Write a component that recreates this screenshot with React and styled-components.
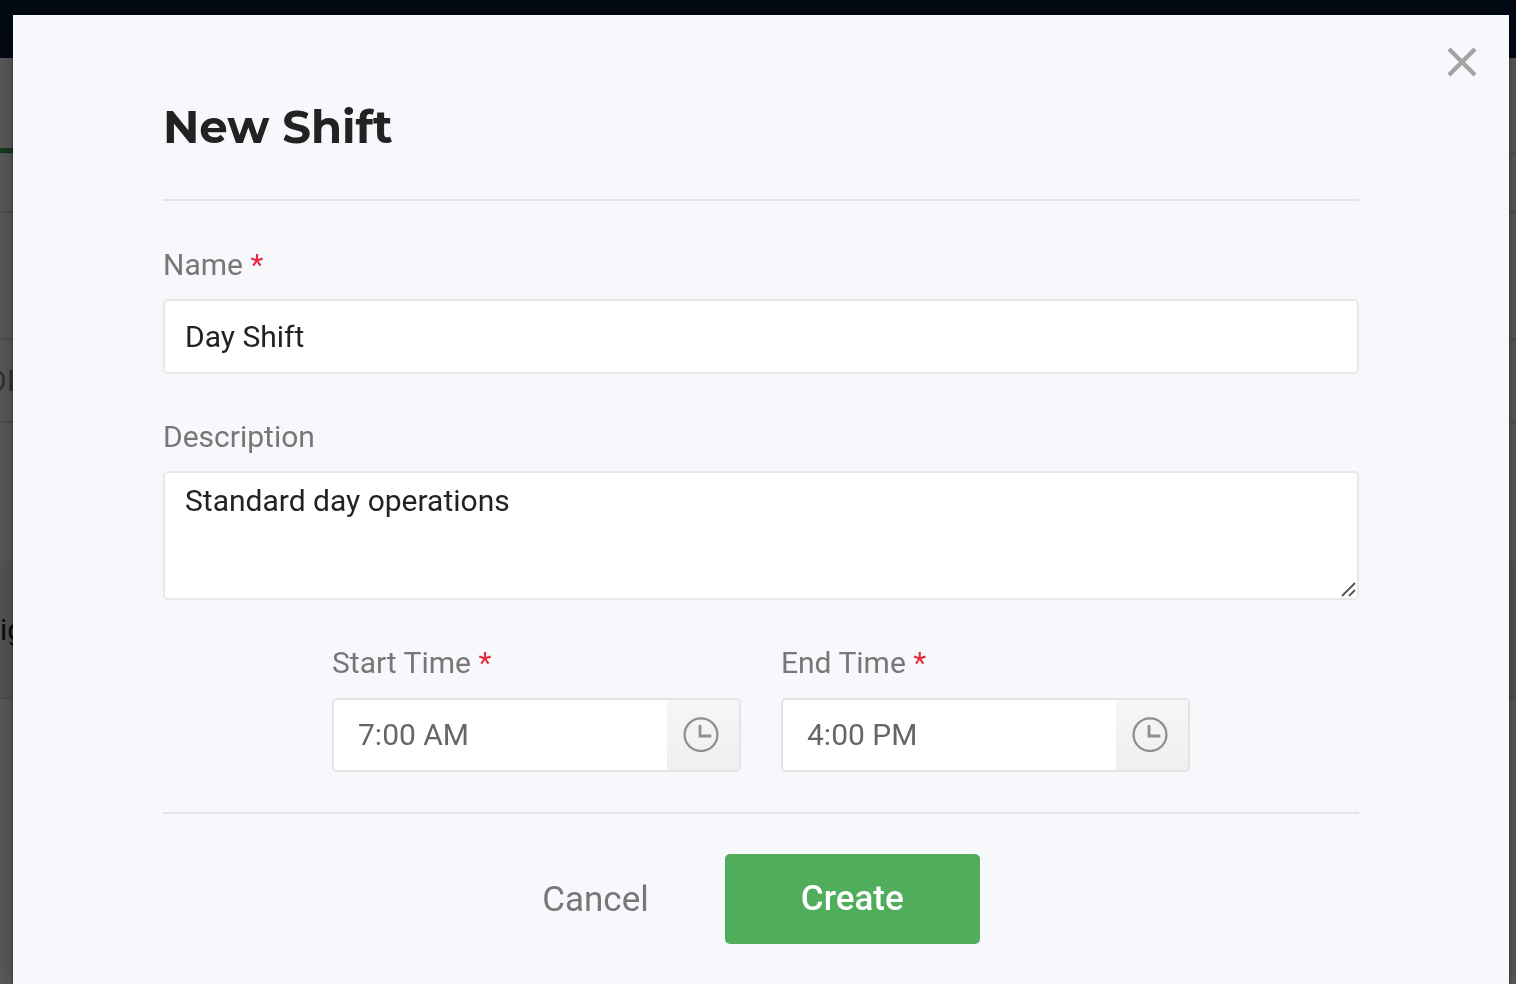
import React, { useState } from "react";
import styled, { createGlobalStyle } from "styled-components";

const GlobalStyle = createGlobalStyle`
  * {
    box-sizing: border-box;
  }
  body {
    margin: 0;
    overflow: hidden;
    background: #fff;
    font-family: Roboto, "Liberation Sans", sans-serif;
    font-size: 30px;
    color: #222;
  }
`;

const Page = styled.div`
  min-height: 100vh;
  overflow: hidden;
`;

const TopBar = styled.header`
  height: 58px;
  background: #051c36;
`;

const Tabs = styled.nav`
  display: flex;
  height: 96px;
  border-bottom: 2px solid #e8e8e8;
`;

const Tab = styled.div`
  width: 120px;
  height: 95px;
  border-bottom: 5px solid #3fa648;
`;

const PageRow = styled.div`
  display: flex;
  align-items: center;
  height: ${({ $height }) => $height}px;
  background: ${({ $shaded }) => ($shaded ? "#efefef" : "#fff")};
  border-bottom: ${({ $line }) => ($line ? "2px solid #e0e0e0" : "none")};
  color: ${({ $muted }) => ($muted ? "#8c8c8c" : "#222")};
`;

const Clipped = styled.span`
  margin-left: -14px;
`;

const Overlay = styled.div`
  position: fixed;
  inset: 0;
  display: flex;
  padding: 15px 7px 0 13px;
  background: rgba(0, 0, 0, 0.65);
`;

const Modal = styled.form`
  position: relative;
  flex: 1;
  min-width: 0;
  padding: 84px 150px 40px;
  background: #f6f8fc;
  box-shadow: 0 0 3px rgba(0, 0, 0, 0.4), 0 0 20px rgba(0, 0, 0, 0.3);
`;

const CloseButton = styled.button`
  position: absolute;
  top: 32px;
  right: 32px;
  display: flex;
  padding: 0;
  border: 0;
  background: none;
  color: #a3a3a3;
  cursor: pointer;
`;

const Title = styled.h1`
  margin: 0;
  font-family: Montserrat, Inter, sans-serif;
  font-size: 45px;
  font-weight: 700;
  line-height: 56px;
`;

const Divider = styled.hr`
  height: 2px;
  margin: 44px 0;
  border: 0;
  background: #e3e5e5;
`;

const Field = styled.div`
  display: flex;
  flex-direction: column;
  gap: 15px;
  margin-bottom: 43px;
`;

const Label = styled.label`
  line-height: 39px;
  color: #777;
`;

const Required = styled.span`
  color: #e8283c;
`;

const TextInput = styled.input`
  width: 100%;
  height: 75px;
  padding: 0 20px;
  border: 2px solid #e7e8e8;
  border-radius: 5px;
  background: #fff;
  color: #222;
  font: inherit;
  outline: none;
`;

const AreaWrap = styled.div`
  position: relative;
  display: flex;
`;

const TextArea = styled.textarea`
  width: 100%;
  height: 129px;
  padding: 8px 20px;
  border: 2px solid #e7e8e8;
  border-radius: 5px;
  background: #fff;
  color: #222;
  font: inherit;
  line-height: 40px;
  resize: none;
  outline: none;
`;

const Grip = styled.svg`
  position: absolute;
  right: 3px;
  bottom: 3px;
  pointer-events: none;
`;

const Times = styled.div`
  display: flex;
  justify-content: center;
  gap: 40px;
`;

const TimeField = styled.div`
  display: flex;
  flex-direction: column;
  gap: 16px;
  width: 409px;
`;

const TimeBox = styled.div`
  display: flex;
  height: 74px;
  border: 2px solid #e3e4e4;
  border-radius: 5px;
  background: #fff;
  overflow: hidden;
`;

const TimeInput = styled.input`
  flex: 1;
  min-width: 0;
  padding: 0 24px 2px;
  border: 0;
  background: none;
  color: #666;
  font: inherit;
  outline: none;
`;

const ClockButton = styled.button`
  display: flex;
  align-items: center;
  justify-content: center;
  width: 72px;
  padding: 0 4px 0 0;
  border: 0;
  background: linear-gradient(#f6f6f6, #efefef);
  color: #8f8f8f;
  cursor: pointer;
`;

const Actions = styled.footer`
  display: flex;
  align-items: center;
  justify-content: center;
  gap: 76px;
  margin-top: 40px;
  padding-top: 40px;
  border-top: 2px solid #e3e5e5;
`;

const CancelButton = styled.button`
  padding: 0;
  border: 0;
  background: none;
  color: #777;
  font: inherit;
  font-size: 35px;
  cursor: pointer;
`;

const CreateButton = styled.button`
  width: 255px;
  height: 90px;
  padding: 0 0 2px;
  border: 0;
  border-radius: 5px;
  background: #4fad5b;
  color: #fff;
  font: inherit;
  font-size: 35px;
  font-weight: 500;
  cursor: pointer;
`;

const ClockIcon = () => (
  <svg width="36" height="36" viewBox="0 0 36 36" fill="none" stroke="currentColor">
    <circle cx="18" cy="17.7" r="16.4" strokeWidth="2.3" />
    <path d="M17 8v11h11.3" strokeWidth="2.8" />
  </svg>
);

const TimePicker = ({ id, label, value, onChange }) => (
  <TimeField>
    <Label htmlFor={id}>
      {label} <Required>*</Required>
    </Label>
    <TimeBox>
      <TimeInput id={id} value={value} onChange={(e) => onChange(e.target.value)} />
      <ClockButton type="button" aria-label={`Pick ${label}`}>
        <ClockIcon />
      </ClockButton>
    </TimeBox>
  </TimeField>
);

const App = () => {
  const [name, setName] = useState("Day Shift");
  const [description, setDescription] = useState("Standard day operations");
  const [start, setStart] = useState("7:00 AM");
  const [end, setEnd] = useState("4:00 PM");

  return (
    <>
      <GlobalStyle />
      <Page>
        <TopBar />
        <Tabs>
          <Tab />
        </Tabs>
        <PageRow $height={59} $line />
        <PageRow $height={127} $line />
        <PageRow $height={83} $line $muted>
          <Clipped>OI</Clipped>
        </PageRow>
        <PageRow $height={138} />
        <PageRow $height={138} $line $shaded>
          ig
        </PageRow>
      </Page>
      <Overlay>
        <Modal onSubmit={(e) => e.preventDefault()}>
          <CloseButton type="button" aria-label="Close">
            <svg width="30" height="30" viewBox="0 0 30 30" stroke="currentColor" strokeWidth="4.4">
              <path d="M2 2l26 26M28 2L2 28" />
            </svg>
          </CloseButton>
          <Title>New Shift</Title>
          <Divider />
          <Field>
            <Label htmlFor="name">
              Name <Required>*</Required>
            </Label>
            <TextInput id="name" value={name} onChange={(e) => setName(e.target.value)} />
          </Field>
          <Field>
            <Label htmlFor="description">Description</Label>
            <AreaWrap>
              <TextArea
                id="description"
                value={description}
                onChange={(e) => setDescription(e.target.value)}
              />
              <Grip width="15" height="15" viewBox="0 0 15 15" stroke="#555" strokeWidth="1.8">
                <path d="M1 14L14 1M8 14l6-6" />
              </Grip>
            </AreaWrap>
          </Field>
          <Times>
            <TimePicker id="start" label="Start Time" value={start} onChange={setStart} />
            <TimePicker id="end" label="End Time" value={end} onChange={setEnd} />
          </Times>
          <Actions>
            <CancelButton type="button">Cancel</CancelButton>
            <CreateButton type="submit">Create</CreateButton>
          </Actions>
        </Modal>
      </Overlay>
    </>
  );
};

export default App;
